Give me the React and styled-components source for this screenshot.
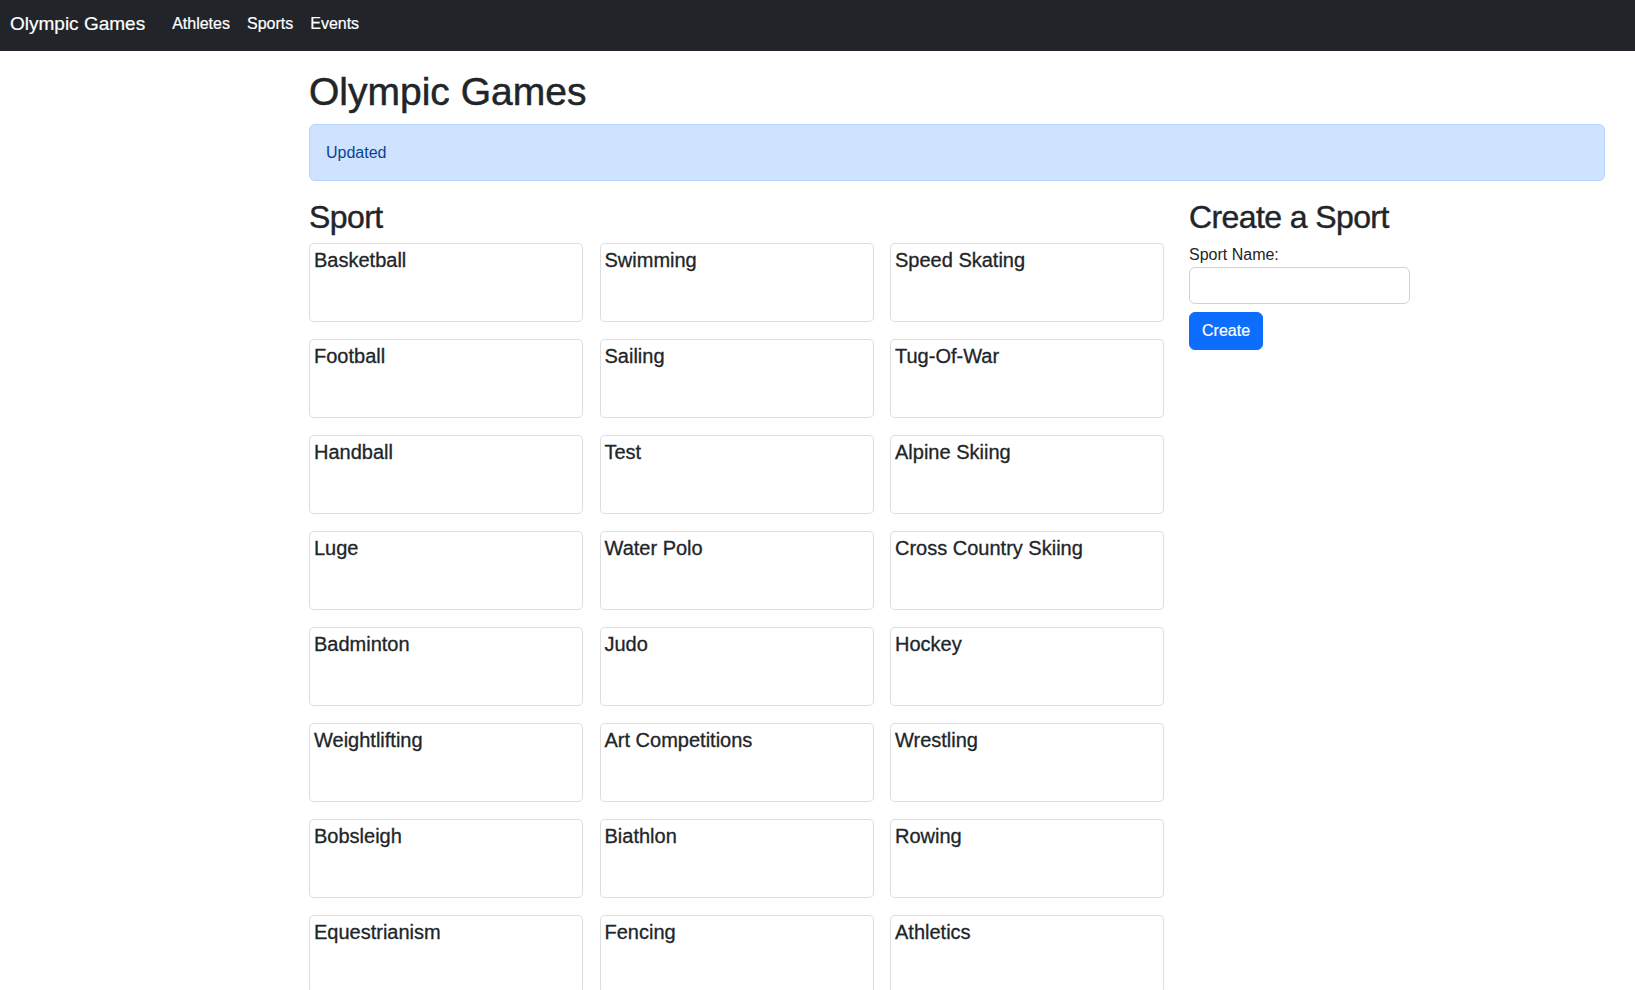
import React from "react";
import styled, { createGlobalStyle } from "styled-components";

const sports = [
  "Basketball",
  "Swimming",
  "Speed Skating",
  "Football",
  "Sailing",
  "Tug-Of-War",
  "Handball",
  "Test",
  "Alpine Skiing",
  "Luge",
  "Water Polo",
  "Cross Country Skiing",
  "Badminton",
  "Judo",
  "Hockey",
  "Weightlifting",
  "Art Competitions",
  "Wrestling",
  "Bobsleigh",
  "Biathlon",
  "Rowing",
  "Equestrianism",
  "Fencing",
  "Athletics",
];

const navItems = ["Athletes", "Sports", "Events"];

const App = () => {
  return (
    <>
      <GlobalStyle />
      <Navbar>
        <Brand href="#">Olympic Games</Brand>
        <NavList>
          {navItems.map((item) => (
            <NavLink key={item} href="#">
              {item}
            </NavLink>
          ))}
        </NavList>
      </Navbar>
      <Page>
        <Title>Olympic Games</Title>
        <Alert role="alert">Updated</Alert>
        <Columns>
          <section>
            <SectionTitle>Sport</SectionTitle>
            <CardGrid>
              {sports.map((sport) => (
                <Card key={sport}>
                  <CardTitle>{sport}</CardTitle>
                </Card>
              ))}
            </CardGrid>
          </section>
          <aside>
            <SectionTitle>Create a Sport</SectionTitle>
            <form onSubmit={(e) => e.preventDefault()}>
              <Label htmlFor="sportName">Sport Name:</Label>
              <Input id="sportName" name="sportName" type="text" />
              <Button type="submit">Create</Button>
            </form>
          </aside>
        </Columns>
      </Page>
    </>
  );
};

const GlobalStyle = createGlobalStyle`
  html, body {
    overflow: hidden;
  }
  body {
    margin: 0;
    font-family: "Liberation Sans", Arial, sans-serif;
    font-size: 16px;
    line-height: 1.5;
    color: #212529;
    background: #fff;
  }
  *, *::before, *::after {
    box-sizing: border-box;
  }
`;

const Navbar = styled.nav`
  display: flex;
  align-items: center;
  height: 51px;
  padding: 0 0 4px 10px;
  background: #212529;
`;

const Brand = styled.a`
  font-size: 19px;
  line-height: 28px;
  color: #fff;
  text-decoration: none;
  -webkit-text-stroke: 0.2px #fff;
`;

const NavList = styled.div`
  display: flex;
  gap: 17px;
  margin-left: 27px;
`;

const NavLink = styled.a`
  font-size: 16px;
  line-height: 24px;
  color: #fff;
  text-decoration: none;
  -webkit-text-stroke: 0.2px #fff;
`;

const Page = styled.main`
  padding: 0 30px 0 309px;
`;

const Title = styled.h1`
  margin: 18px 0 9px;
  font-size: 39px;
  font-weight: 500;
  line-height: 1.17;
  -webkit-text-stroke: 0.5px #212529;
`;

const Alert = styled.div`
  margin-bottom: 17px;
  padding: 16px 16px 15px;
  border: 1px solid #b6d4fe;
  border-radius: 6px;
  background: #cfe2ff;
  color: #084298;
`;

const Columns = styled.div`
  display: grid;
  grid-template-columns: 855px 1fr;
  gap: 25px;
`;

const SectionTitle = styled.h2`
  margin: 0 0 7px;
  font-size: 32px;
  font-weight: 500;
  line-height: 1.2;
  letter-spacing: -0.6px;
  -webkit-text-stroke: 0.4px #212529;
`;

const CardGrid = styled.div`
  display: grid;
  grid-template-columns: repeat(3, 1fr);
  column-gap: 16.5px;
  row-gap: 17px;
`;

const Card = styled.div`
  height: 79px;
  padding: 4px;
  border: 1px solid rgba(0, 0, 0, 0.13);
  border-radius: 5px;
  background: #fff;
`;

const CardTitle = styled.h5`
  margin: 0;
  font-size: 20px;
  font-weight: 500;
  line-height: 1.2;
  -webkit-text-stroke: 0.3px #212529;
`;

const Label = styled.label`
  display: block;
  font-size: 16px;
  line-height: 24px;
`;

const Input = styled.input`
  display: block;
  width: 221px;
  height: 37px;
  padding: 6px 12px;
  border: 1px solid #ced4da;
  border-radius: 6px;
  font: inherit;
  color: #212529;
  outline: none;
`;

const Button = styled.button`
  display: block;
  margin-top: 8px;
  padding: 6px 12px;
  border: 1px solid #0d6efd;
  border-radius: 6px;
  background: #0d6efd;
  color: #fff;
  font-family: inherit;
  font-size: 16px;
  line-height: 24px;
  cursor: pointer;
  -webkit-text-stroke: 0.2px #fff;
`;

export default App;
